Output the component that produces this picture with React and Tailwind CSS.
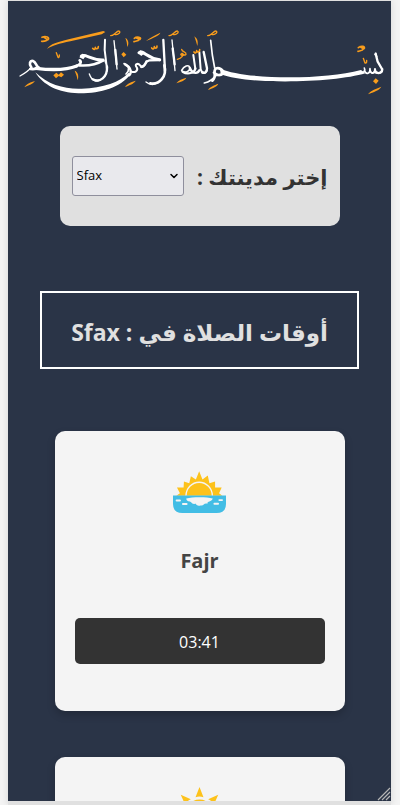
import { ChevronDown } from "lucide-react";

const cities = ["Sfax", "Tunis", "Sousse", "Gabes", "Bizerte"];

function Basmala() {
  return (
    <svg viewBox="57 87 1095 198" className="block w-full" role="img" aria-label="Basmala calligraphy">
      <g fill="none" stroke="#fff" strokeLinecap="round" strokeLinejoin="round">
        <path strokeWidth="4" d="M60 228C74 220 86 213 93 202" />
        <path strokeWidth="8" d="M94 202C86 192 90 181 99 183C110 187 106 198 117 203C111 207 101 208 91 207" />
        <path strokeWidth="10" d="M108 205C150 210 198 211 230 198" />
        <path strokeWidth="8" d="M230 198C240 194 246 187 239 181M238 196C265 198 292 192 310 181" />
        <path strokeWidth="9" d="M244 168C258 160 274 181 309 180" />
        <path strokeWidth="4" d="M268 222C276 244 290 248 302 239M342 122L351 207" />
        <path strokeWidth="7" d="M278 238C299 249 323 232 321 200M346 150L350 193" />
        <path strokeWidth="6" d="M315 119L314 150L321 207M321 212C324 198 318 191 316 183" />
        <path strokeWidth="5" d="M372 191C388 196 390 211 378 222" />
        <path strokeWidth="7" d="M376 194C394 202 395 218 388 226" />
        <path strokeWidth="6" d="M393 214C404 220 416 212 410 202C402 193 413 187 421 197C427 206 436 197 439 184" />
        <path strokeWidth="9" d="M417 158C432 149 438 174 479 179" />
        <path strokeWidth="7" d="M424 201C442 194 432 184 448 181L480 180" />
        <path strokeWidth="4" d="M438 246C452 257 464 255 475 247M516 120L525 212" />
        <path strokeWidth="8" d="M451 250C478 255 502 230 493 196" />
        <path strokeWidth="7" d="M490 120L495 212M518 145L524 193" />
        <path strokeWidth="5" d="M545 211C552 197 566 194 569 201C574 211 556 222 546 213" />
        <path strokeWidth="7" d="M548 215C564 226 584 218 586 205M569 203C574 219 592 224 598 211" />
        <path strokeWidth="6" d="M580 165L586 207M598 156L602 208C606 222 619 222 620 211" />
        <path strokeWidth="7" d="M611 156L621 205C622 215 614 221 606 217" />
        <path strokeWidth="5" d="M632 121L637 165L644 204M613 249C631 245 640 237 649 225" />
        <path strokeWidth="8" d="M637 242C653 229 637 215 647 206C660 199 667 211 673 218C661 228 649 227 642 218" />
        <path strokeWidth="5" d="M1080 217C1095 220 1096 210 1093 204M1093 211C1098 226 1112 221 1110 206" />
        <path strokeWidth="6" d="M1110 211C1115 226 1126 218 1125 207C1126 222 1146 223 1147 207" />
        <path strokeWidth="7" d="M1127 161L1133 185L1146 207C1148 218 1139 221 1128 218" />
      </g>
      <g fill="#fff">
        <path d="M106 217C144 255 195 268 245 266C309 263 362 246 386 218L392 222C361 263 300 281 235 280C177 279 128 255 106 217Z" />
        <path d="M660 206C740 239 966 241 1083 210L1096 220C1006 248 745 256 662 222Z" />
        <path d="M238 172L247 161L260 164L250 178ZM413 159L421 151L435 158L424 168ZM1122 164L1128 157L1133 172Z" />
      </g>
      <g fill="#f99d1c">
        <path d="M141 147C150 132 174 126 206 118L310 93L316 96L305 103L211 124C178 131 155 137 141 147Z" />
        <path d="M438 123C450 112 464 107 481 98C480 106 459 114 438 123Z" />
        <path d="M73 262C80 251 92 247 105 243C99 252 87 255 73 262ZM375 261C382 250 395 246 407 242C401 252 389 255 375 261ZM529 250C536 240 547 237 559 233C554 243 542 245 529 250ZM624 270C631 259 643 256 655 251C650 262 637 264 624 270ZM1104 283C1112 271 1130 266 1144 260C1138 271 1121 276 1104 283Z" />
        <path d="M160 226L169 218L176 224L183 217L192 224L184 232L176 228L168 235ZM364 163L371 156L379 164L371 172ZM1119 244L1127 235L1136 242L1128 252Z" />
        <path d="M224 212C234 216 237 228 233 241L230 228ZM376 113C388 121 386 133 382 141L380 126ZM583 109C595 118 594 128 592 138L588 124Z" />
      </g>
      <g fill="none" stroke="#f99d1c" strokeWidth="5" strokeLinecap="round" strokeLinejoin="round">
        <path d="M126 112C137 106 151 113 144 119C137 117 134 113 131 111M144 117C139 125 132 124 125 124M403 115C410 109 427 112 420 118C414 117 411 114 408 113M420 117C414 124 409 123 402 125" />
        <path d="M1075 143C1084 135 1098 140 1092 146C1085 144 1082 142 1080 140M1092 145C1087 153 1081 152 1074 154" />
        <path d="M278 145C282 151 286 148 286 142C287 149 295 147 295 140M455 144C459 149 463 146 463 140C464 147 472 145 471 138M582 156C585 161 590 158 590 152C592 159 599 156 599 149" />
        <path strokeWidth="4" d="M169 158L174 172C178 174 178 168 178 165M1090 175L1095 189C1101 190 1100 184 1100 181" />
        <path strokeWidth="4" d="M332 107C341 108 350 92 357 93C365 97 352 106 344 103M507 107C516 108 525 92 532 93C540 97 527 106 519 103M623 107C632 108 641 92 648 93C656 97 643 106 635 103" />
        <path strokeWidth="4" d="M532 178C545 174 552 166 546 161C541 160 540 169 552 165M545 148C546 157 560 155 558 163C555 168 549 163 546 160" />
      </g>
    </svg>
  );
}

function SunriseIcon() {
  return (
    <svg viewBox="0 0 160 128" className="h-[43px] w-[53px]" aria-hidden="true">
      <path fill="#fdc21b" d="M10 74L21 66L12 49L32 49L33 31L49 36L54 15L69 25L79 0L89 25L105 13L110 36L127 31L127 49L147 49L139 66L149 74Z" />
      <path fill="none" stroke="#f4f4f4" strokeWidth="4" d="M39 75a40 42 0 0 1 80 0" />
      <path fill="#42bde5" d="M0 73H160V99Q160 126 132 126H28Q0 126 0 99Z" />
      <path fill="#f4f4f4" d="M40 82C60 77 101 77 120 82C116 93 103 89 104 98C92 95 94 105 83 103C75 105 70 102 69 98C58 100 58 95 51 91C43 91 40 86 40 82Z" />
      <g fill="#f4f4f4">
        <rect x="8" y="85" width="16" height="6" rx="3" />
        <rect x="27" y="96" width="17" height="6" rx="3" />
        <rect x="137" y="84" width="14" height="6" rx="3" />
        <rect x="122" y="95" width="17" height="6" rx="3" />
      </g>
    </svg>
  );
}

function SunIcon() {
  return (
    <svg viewBox="-80 -80 160 160" className="size-[53px]" aria-hidden="true">
      <g fill="#fdc21b">
        <circle r="42" />
        {[0, 45, 90, 135, 180, 225, 270, 315].map((angle) => (
          <path key={angle} transform={`rotate(${angle})`} d="M0-80L12-49Q0-54-12-49Z" />
        ))}
      </g>
    </svg>
  );
}

function PrayerCard({ children }) {
  return (
    <article className="flex h-[280px] w-[290px] shrink-0 flex-col items-center rounded-[10px] bg-[#f4f4f4] px-5 shadow-[0_4px_8px_rgba(0,0,0,0.2)]">
      {children}
    </article>
  );
}

export default function App() {
  return (
    <div className="flex h-screen flex-col bg-[#f4f4f4] font-['Open_Sans','DejaVu_Sans',sans-serif]">
      <div className="relative mr-[9px] ml-2 flex min-h-0 flex-1 flex-col border-t border-b-4 border-[#e0e0e0] shadow-[0_0_8px_rgba(0,0,0,0.12)]">
        <main className="flex min-h-0 flex-1 flex-col items-center overflow-hidden bg-[#2a3447]">
          <header className="w-full shrink-0 pt-7 pr-[7px] pl-[11px]">
            <Basmala />
          </header>
          <section dir="rtl" className="mt-[31px] flex h-[100px] w-[280px] shrink-0 items-center justify-between rounded-[10px] bg-[#e0e0e0] px-3">
            <label htmlFor="city" className="pt-1 text-[21px] font-bold whitespace-nowrap text-[#333]">
              إختر مدينتك :
            </label>
            <div dir="ltr" className="relative">
              <select id="city" defaultValue="Sfax" className="block h-10 w-28 appearance-none rounded-[3px] border border-[#8f8f9d] bg-[#e9e9ed] px-1 text-[13px] text-black">
                {cities.map((city) => (
                  <option key={city}>{city}</option>
                ))}
              </select>
              <ChevronDown className="pointer-events-none absolute top-[14px] right-1 size-3" strokeWidth={3} />
            </div>
          </section>
          <h1 dir="rtl" className="mt-[65px] flex h-[78px] w-[319px] shrink-0 items-center justify-center border-2 border-white pt-1 text-[23px] font-bold whitespace-nowrap text-[#e0e0e0]">
            أوقات الصلاة في : Sfax
          </h1>
          <div className="mt-[62px] flex shrink-0 flex-col gap-[46px]">
            <PrayerCard>
              <div className="pt-10">
                <SunriseIcon />
              </div>
              <h2 className="mt-[27px] text-xl leading-10 font-bold text-[#444]">Fajr</h2>
              <p className="mt-[37px] flex h-[46px] w-full items-center justify-center rounded-[5px] bg-[#333] pt-0.5 text-base text-white">
                03:41
              </p>
            </PrayerCard>
            <PrayerCard>
              <div className="pt-[30px]">
                <SunIcon />
              </div>
            </PrayerCard>
          </div>
        </main>
        <svg viewBox="0 0 14 14" className="absolute right-0 bottom-0 size-[14px]" aria-hidden="true">
          <path d="M1 13L13 1M5 13L13 5M9 13L13 9" stroke="#b5b5b5" strokeWidth="1.2" />
        </svg>
      </div>
    </div>
  );
}
